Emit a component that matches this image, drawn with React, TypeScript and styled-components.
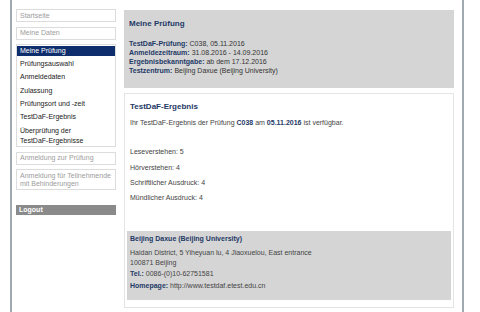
import styled, { createGlobalStyle } from "styled-components";

const GlobalStyle = createGlobalStyle`
  html, body {
    margin: 0;
    padding: 0;
    background: #fff;
  }
  body {
    font-family: "Liberation Sans", Arial, sans-serif;
    font-size: 7px;
    color: #333;
  }
  p {
    margin: 0;
  }
`;

const Page = styled.div`
  box-sizing: border-box;
  margin-left: 10px;
  width: 454px;
  height: 312px;
  border-left: 2px solid #9eaab0;
  border-right: 2px solid #9eaab0;
  padding: 9px 8px 0 4px;
  display: flex;
  align-items: flex-start;
  gap: 8px;
`;

const Sidebar = styled.nav`
  width: 100px;
  display: flex;
  flex-direction: column;
  gap: 4.5px;
`;

const SideLink = styled.div`
  border: 1px solid #dcdcdc;
  padding: 1.5px 2px 1.5px 3px;
  line-height: 8px;
  color: #9c9c9c;
`;

const MenuList = styled.div`
  border: 1px solid #dcdcdc;
  padding: 0.7px 0 0.6px;
  display: flex;
  flex-direction: column;
  gap: 3.33px;
`;

const MenuItem = styled.div<{ $active?: boolean }>`
  line-height: 10px;
  padding: 0 2px 0 3px;
  color: ${(p) => (p.$active ? "#fff" : "#222")};
  background: ${(p) => (p.$active ? "#0d2d6c" : "transparent")};
`;

const NoWrap = styled.span`
  white-space: nowrap;
`;

const LogoutBar = styled.div`
  margin-top: 10px;
  line-height: 10.3px;
  padding: 0 3px;
  background: #8a8a8a;
  color: #fff;
  font-weight: bold;
`;

const Main = styled.main`
  width: 330px;
`;

const SummaryBox = styled.section`
  margin-top: 1px;
  background: #d5d5d5;
  padding: 9.3px 5px 12.5px;
`;

const Heading = styled.h2`
  margin: 0;
  font-size: 8px;
  line-height: 10px;
  color: #1e3966;
`;

const InfoList = styled.div`
  margin-top: 10px;
`;

const InfoRow = styled.p`
  line-height: 9px;
  color: #333;
`;

const Label = styled.b`
  color: #1e3966;
`;

const ResultPanel = styled.section`
  margin-top: 5px;
  border: 1px solid #e4e4e4;
  padding: 8px 2px 7.3px;
`;

const PanelInner = styled.div`
  padding: 0 3px;
`;

const Intro = styled.p`
  margin-top: 6.5px;
  line-height: 9px;
  color: #444;
`;

const Strong = styled.b`
  color: #1e3966;
`;

const Scores = styled.div`
  margin-top: 20px;
  display: flex;
  flex-direction: column;
  gap: 6.3px;
`;

const Score = styled.p`
  line-height: 9px;
  color: #444;
`;

const ContactBox = styled.div`
  margin-top: 28.5px;
  background: #d5d5d5;
  padding: 3px 3px 10px;
  color: #444;
`;

const ContactLine = styled.p<{ $gap?: number }>`
  margin-top: ${(p) => p.$gap ?? 0}px;
  line-height: 9px;
`;

const Address = styled.p`
  margin-top: 5px;
  line-height: 10px;
`;

const menu = [
  "Prüfungsauswahl",
  "Anmeldedaten",
  "Zulassung",
  "Prüfungsort und -zeit",
  "TestDaF-Ergebnis",
];

const scores = [
  ["Leseverstehen", 5],
  ["Hörverstehen", 4],
  ["Schriftlicher Ausdruck", 4],
  ["Mündlicher Ausdruck", 4],
];

export default function App() {
  return (
    <>
      <GlobalStyle />
      <Page>
        <Sidebar>
          <SideLink>Startseite</SideLink>
          <SideLink>Meine Daten</SideLink>
          <MenuList>
            <MenuItem $active>Meine Prüfung</MenuItem>
            {menu.map((m) => (
              <MenuItem key={m}>{m}</MenuItem>
            ))}
            <MenuItem>
              Überprüfung der <NoWrap>TestDaF-Ergebnisse</NoWrap>
            </MenuItem>
          </MenuList>
          <SideLink>Anmeldung zur Prüfung</SideLink>
          <SideLink>Anmeldung für Teilnehmende mit Behinderungen</SideLink>
          <LogoutBar>Logout</LogoutBar>
        </Sidebar>

        <Main>
          <SummaryBox>
            <Heading>Meine Prüfung</Heading>
            <InfoList>
              <InfoRow>
                <Label>TestDaF-Prüfung:</Label> C038, 05.11.2016
              </InfoRow>
              <InfoRow>
                <Label>Anmeldezeitraum:</Label> 31.08.2016 - 14.09.2016
              </InfoRow>
              <InfoRow>
                <Label>Ergebnisbekanntgabe:</Label> ab dem 17.12.2016
              </InfoRow>
              <InfoRow>
                <Label>Testzentrum:</Label> Beijing Daxue (Beijing University)
              </InfoRow>
            </InfoList>
          </SummaryBox>

          <ResultPanel>
            <PanelInner>
              <Heading>TestDaF-Ergebnis</Heading>
              <Intro>
                Ihr TestDaF-Ergebnis der Prüfung <Strong>C038</Strong> am{" "}
                <Strong>05.11.2016</Strong> ist verfügbar.
              </Intro>
              <Scores>
                {scores.map(([name, val]) => (
                  <Score key={name}>
                    {name}: {val}
                  </Score>
                ))}
              </Scores>
            </PanelInner>
            <ContactBox>
              <ContactLine>
                <Label>Beijing Daxue (Beijing University)</Label>
              </ContactLine>
              <Address>
                Haidan District, 5 Yiheyuan lu, 4 Jiaoxuelou, East entrance
                <br />
                100871 Beijing
              </Address>
              <ContactLine $gap={1.5}>
                <Label>Tel.:</Label> 0086-(0)10-62751581
              </ContactLine>
              <ContactLine $gap={3}>
                <Label>Homepage:</Label> http://www.testdaf.etest.edu.cn
              </ContactLine>
            </ContactBox>
          </ResultPanel>
        </Main>
      </Page>
    </>
  );
}
